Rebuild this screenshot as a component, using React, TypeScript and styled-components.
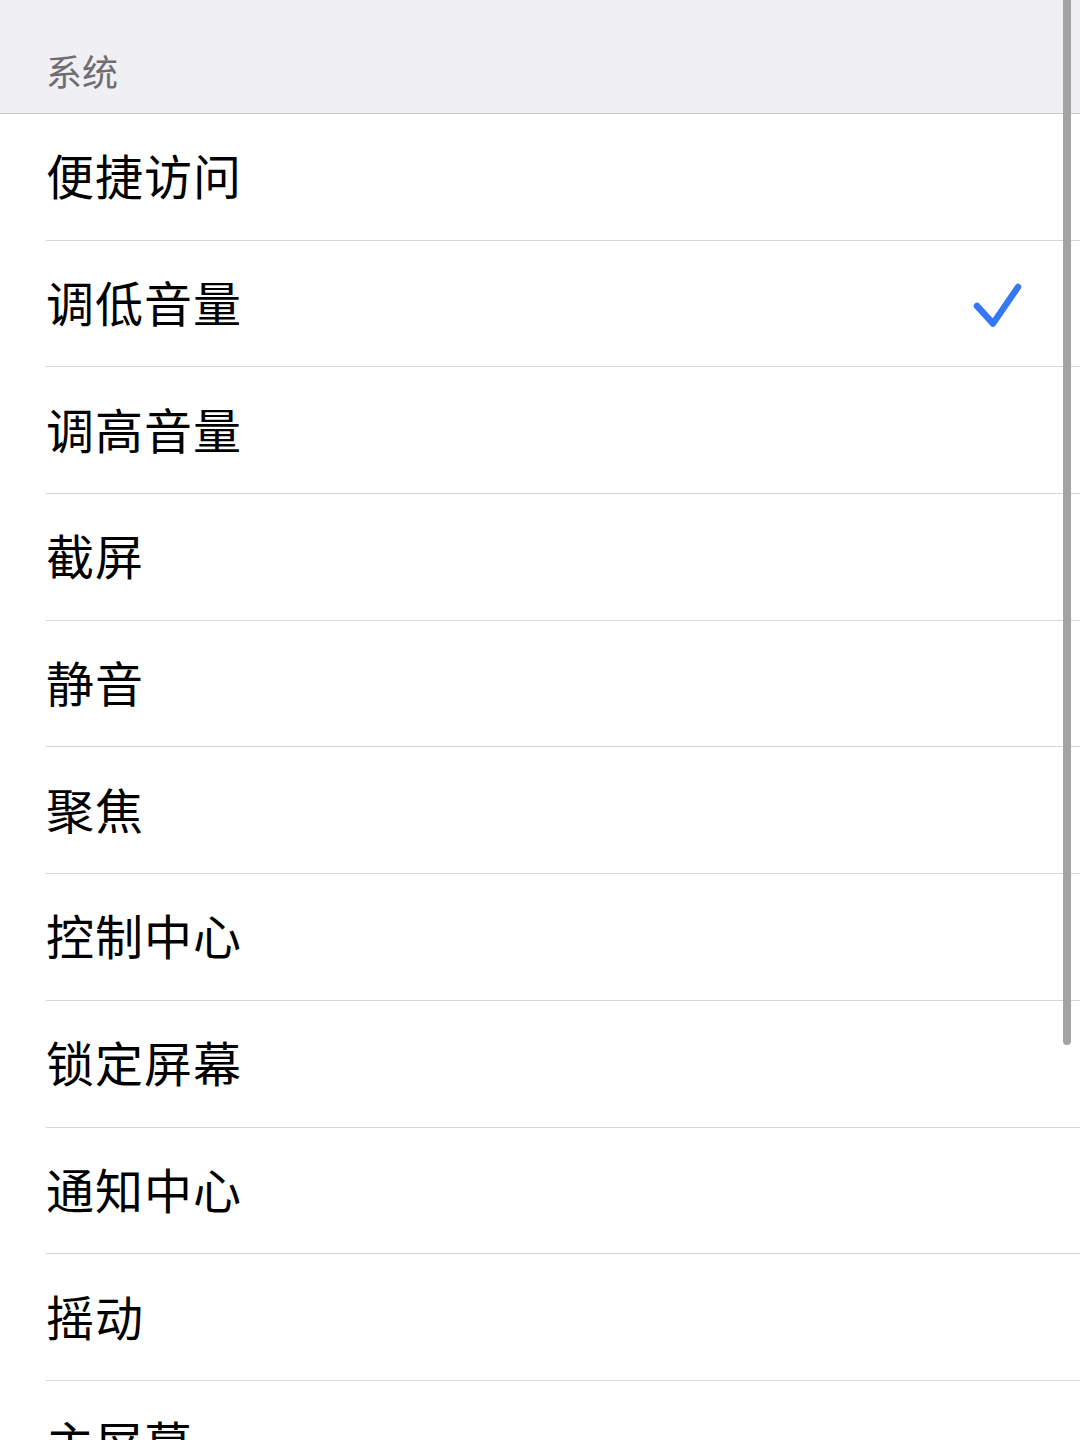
import React from "react";
import styled, { createGlobalStyle } from "styled-components";

const items = [
  "便捷访问",
  "调低音量",
  "调高音量",
  "截屏",
  "静音",
  "聚焦",
  "控制中心",
  "锁定屏幕",
  "通知中心",
  "摇动",
  "主屏幕",
];

const SELECTED = "调低音量";

const GlobalStyle = createGlobalStyle`
  html, body {
    margin: 0;
    padding: 0;
    background: #ffffff;
    overflow: hidden;
  }
  body {
    font-family: "Noto Sans CJK SC", "Noto Sans", sans-serif;
    -webkit-font-smoothing: antialiased;
  }
`;

const CheckIcon = () => (
  <svg width="54" height="52" viewBox="0 0 54 52" fill="none">
    <path
      d="M9 24 L25 41.5 L50 5"
      stroke="#3478f6"
      strokeWidth="6.5"
      strokeLinecap="round"
      strokeLinejoin="round"
    />
  </svg>
);

const App = () => {
  return (
    <Screen>
      <GlobalStyle />
      <SectionHeader>
        <HeaderText>系统</HeaderText>
      </SectionHeader>
      <List>
        {items.map((item) => (
          <Row key={item}>
            <Label>{item}</Label>
            {item === SELECTED && (
              <Check>
                <CheckIcon />
              </Check>
            )}
          </Row>
        ))}
      </List>
      <ScrollThumb />
    </Screen>
  );
};

export default App;

const Screen = styled.div`
  position: relative;
  width: 1080px;
  height: 1440px;
  overflow: hidden;
  background: #ffffff;
`;

const SectionHeader = styled.div`
  height: 114px;
  background: #efeff4;
  border-bottom: 1px solid #c8c7cc;
  display: flex;
  align-items: flex-end;
  padding: 0 46px 19px;
  box-sizing: border-box;
`;

const HeaderText = styled.span`
  font-size: 36px;
  line-height: 48px;
  color: #6d6d72;
`;

const List = styled.div`
  display: flex;
  flex-direction: column;
`;

const Row = styled.div`
  height: 126.7px;
  flex-shrink: 0;
  margin-left: 46px;
  padding: 0 58px 0 0;
  box-sizing: border-box;
  border-bottom: 1px solid #d6d6da;
  display: flex;
  align-items: center;
  justify-content: space-between;
`;

const Label = styled.span`
  font-size: 48px;
  line-height: 1;
  color: #000000;
  letter-spacing: 1px;
  margin-bottom: 5px;
`;

const Check = styled.span`
  display: flex;
  align-items: center;
  margin-top: 8px;
`;

const ScrollThumb = styled.div`
  position: absolute;
  top: -10px;
  right: 9px;
  width: 8px;
  height: 1055px;
  border-radius: 4px;
  background: #a3a3a3;
`;
